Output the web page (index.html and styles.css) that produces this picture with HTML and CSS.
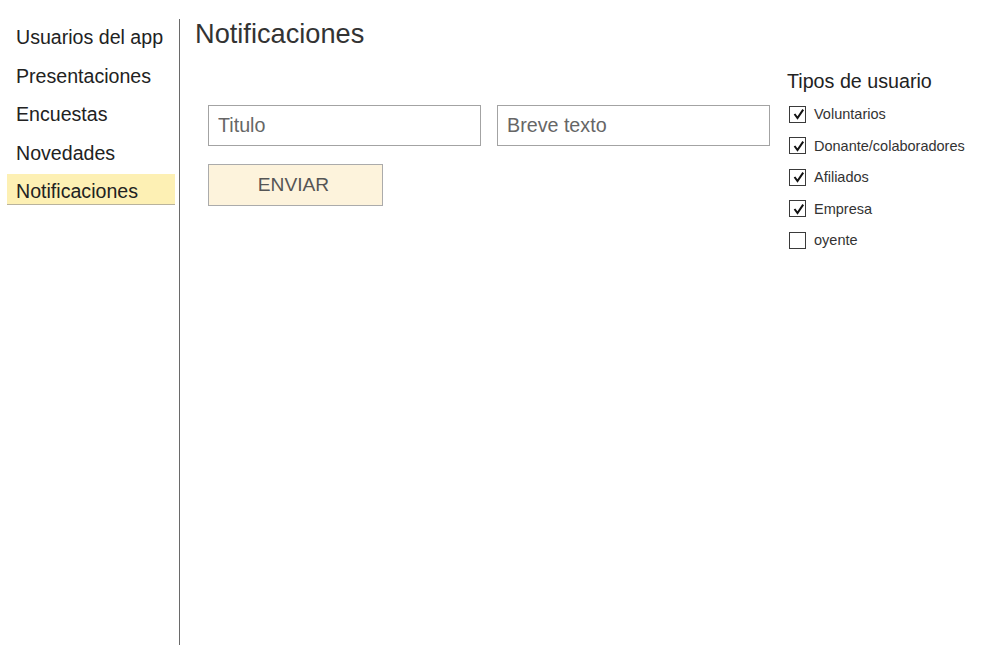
FILE: index.html
```html
<!DOCTYPE html>
<html lang="es">
<head>
<meta charset="utf-8">
<title>Notificaciones</title>
<link rel="stylesheet" href="styles.css">
</head>
<body>
<div class="page">
  <nav class="sidebar">
    <a class="nav-item">Usuarios del app</a>
    <a class="nav-item">Presentaciones</a>
    <a class="nav-item">Encuestas</a>
    <a class="nav-item">Novedades</a>
    <a class="nav-item active">Notificaciones</a>
  </nav>
  <main class="main">
    <section class="content">
      <h1 class="title">Notificaciones</h1>
      <form class="form">
        <div class="fields">
          <input class="field" type="text" placeholder="Titulo">
          <input class="field" type="text" placeholder="Breve texto">
        </div>
        <button class="send" type="button">ENVIAR</button>
      </form>
    </section>
    <aside class="aside">
      <h2 class="aside-title">Tipos de usuario</h2>
      <ul class="checks">
        <li class="check-row"><span class="box"><svg viewBox="0 0 16 16" width="16" height="16"><path d="M4.5 8 L7.5 12 L13.2 3.6" fill="none" stroke="#111" stroke-width="2" stroke-linejoin="miter"/></svg></span>Voluntarios</li>
        <li class="check-row"><span class="box"><svg viewBox="0 0 16 16" width="16" height="16"><path d="M4.5 8 L7.5 12 L13.2 3.6" fill="none" stroke="#111" stroke-width="2" stroke-linejoin="miter"/></svg></span>Donante/colaboradores</li>
        <li class="check-row"><span class="box"><svg viewBox="0 0 16 16" width="16" height="16"><path d="M4.5 8 L7.5 12 L13.2 3.6" fill="none" stroke="#111" stroke-width="2" stroke-linejoin="miter"/></svg></span>Afiliados</li>
        <li class="check-row"><span class="box"><svg viewBox="0 0 16 16" width="16" height="16"><path d="M4.5 8 L7.5 12 L13.2 3.6" fill="none" stroke="#111" stroke-width="2" stroke-linejoin="miter"/></svg></span>Empresa</li>
        <li class="check-row"><span class="box"></span>oyente</li>
      </ul>
    </aside>
  </main>
</div>
</body>
</html>
```

FILE: styles.css
```css
* {
  box-sizing: border-box;
}

html, body {
  margin: 0;
  padding: 0;
  background: #ffffff;
}

body {
  font-family: "Liberation Sans", Arial, sans-serif;
  color: #222;
}

.page {
  display: flex;
  align-items: flex-start;
  width: 1000px;
  height: 665px;
}

.sidebar {
  display: flex;
  flex-direction: column;
  gap: 7.5px;
  width: 180px;
  height: 626px;
  margin-top: 19px;
  padding: 1px 4px 0 7px;
  border-right: 1px solid #6a6a6a;
}

.nav-item {
  display: block;
  padding: 5px 0 0 9px;
  font-size: 19.6px;
  line-height: 25px;
  color: #222;
  border-bottom: 1px solid transparent;
}

.nav-item.active {
  background: #fdf0b4;
  border-bottom-color: #b9b39c;
}

.main {
  display: flex;
  flex: 1;
  padding: 20px 0 0 15px;
}

.content {
  display: flex;
  flex-direction: column;
}

.title {
  margin: 0;
  font-size: 27.2px;
  line-height: 28px;
  font-weight: normal;
  color: #333;
}

.form {
  display: flex;
  flex-direction: column;
  align-items: flex-start;
  gap: 18px;
  margin: 57px 0 0 13px;
}

.fields {
  display: flex;
  gap: 16px;
}

.field {
  width: 273px;
  height: 41px;
  margin: 0;
  padding: 0 9px;
  border: 1px solid #a3a3a3;
  border-radius: 0;
  background: #fff;
  font-family: "Liberation Sans", Arial, sans-serif;
  font-size: 19.7px;
  color: #555;
  outline: none;
}

.field::placeholder {
  color: #666;
  opacity: 1;
}

.send {
  width: 175px;
  height: 42px;
  margin: 0;
  padding: 0 4px 0 0;
  border: 1px solid #ababab;
  border-radius: 0;
  background: #fdf3dc;
  font-family: "Liberation Sans", Arial, sans-serif;
  font-size: 19.2px;
  color: #555;
}

.aside {
  margin: 49px 0 0 17px;
}

.aside-title {
  margin: 0;
  font-size: 19.7px;
  line-height: 24px;
  font-weight: normal;
  color: #222;
}

.checks {
  display: flex;
  flex-direction: column;
  gap: 11.5px;
  margin: 11px 0 0;
  padding: 0;
  list-style: none;
}

.check-row {
  display: flex;
  align-items: center;
  gap: 8px;
  height: 20px;
  padding-left: 2px;
  font-size: 14.5px;
  color: #333;
}

.box {
  display: flex;
  width: 17px;
  height: 17px;
  border: 1px solid #3a3a3a;
  background: #fff;
  align-items: center;
  justify-content: center;
}

.box svg {
  display: block;
  flex: none;
}
```
